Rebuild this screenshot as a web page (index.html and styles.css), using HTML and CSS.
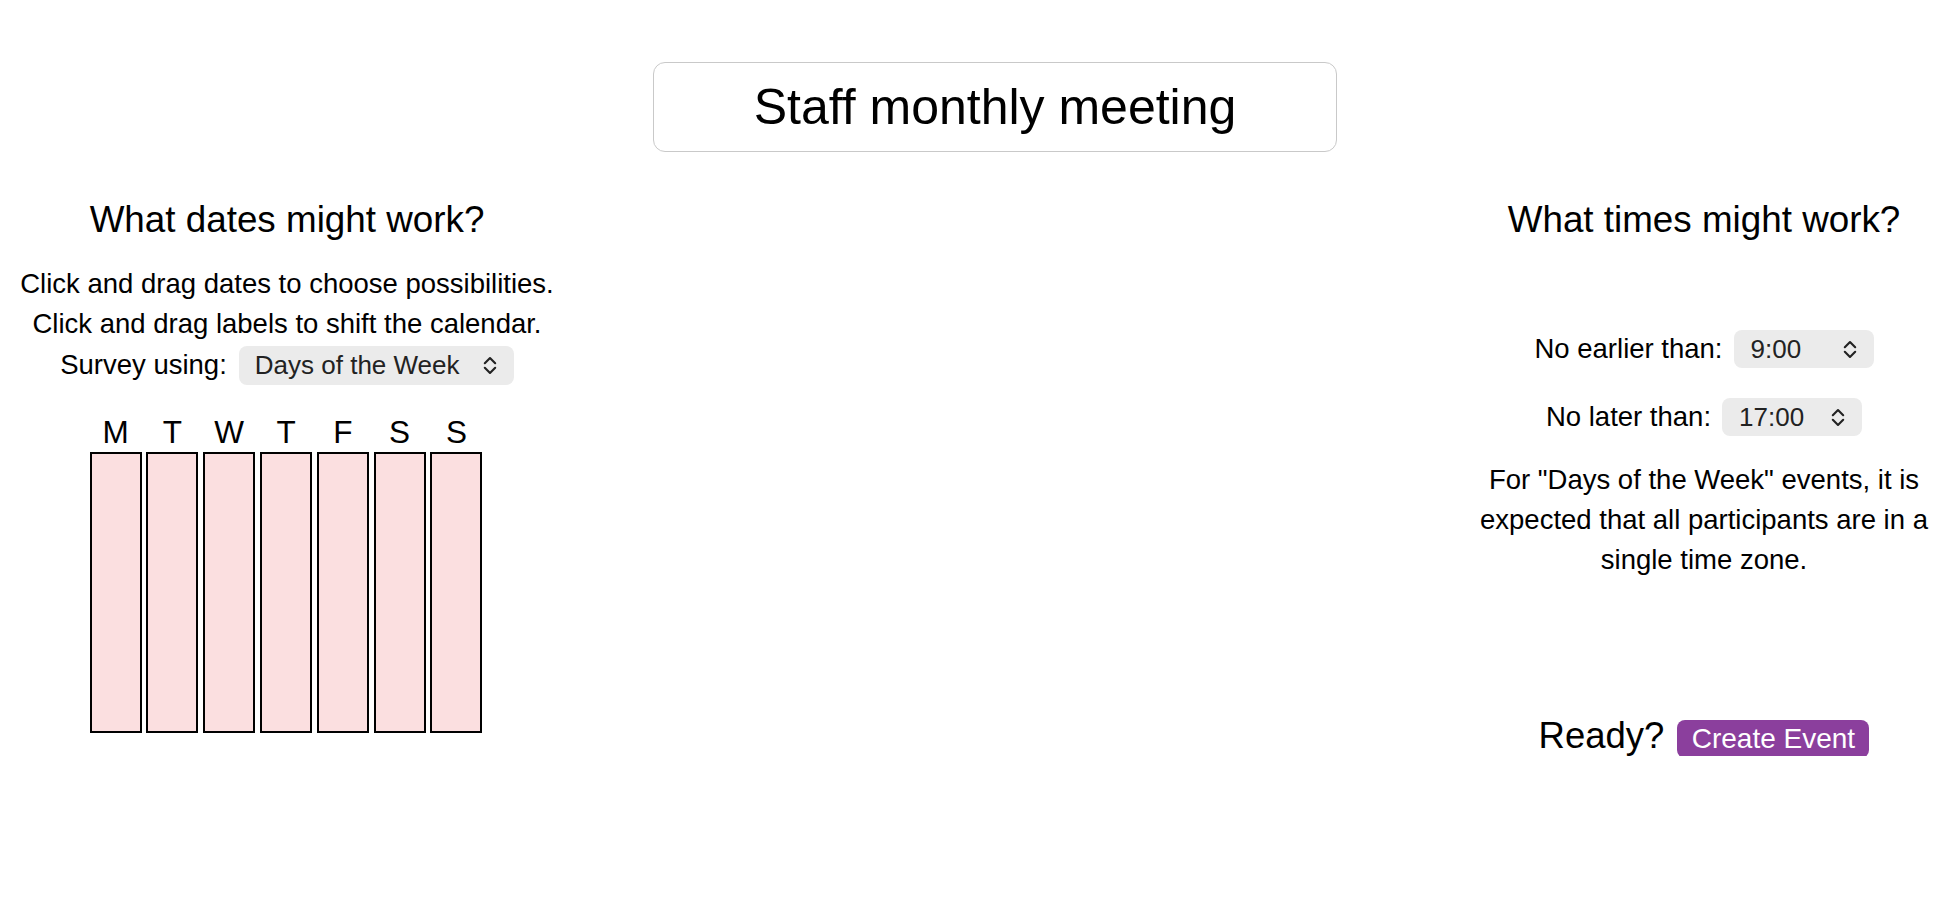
FILE: index.html
```html
<!DOCTYPE html>
<html lang="en">
<head>
<meta charset="utf-8">
<title>Create Event</title>
<link rel="stylesheet" href="styles.css">
</head>
<body>
<main class="page">
  <div class="title-row">
    <input class="event-name" type="text" value="Staff monthly meeting">
  </div>
  <div class="columns">
    <section class="dates">
      <h2 class="heading">What dates might work?</h2>
      <p class="instructions">Click and drag dates to choose possibilities.<br>Click and drag labels to shift the calendar.</p>
      <div class="field-row survey-row">
        <span class="label">Survey using:</span>
        <span class="select-wrap wide">
          <select class="select"><option>Days of the Week</option><option>Specific Dates</option></select>
          <svg class="chevron" viewBox="0 0 14 19" width="14" height="19"><path d="M1.8 7.2 L7 2 L12.2 7.2 M1.8 11.8 L7 17 L12.2 11.8" fill="none" stroke="#222" stroke-width="2.1" stroke-linecap="round" stroke-linejoin="round"/></svg>
        </span>
      </div>
      <div class="week">
        <div class="day"><span class="day-label">M</span><div class="day-cell"></div></div>
        <div class="day"><span class="day-label">T</span><div class="day-cell"></div></div>
        <div class="day"><span class="day-label">W</span><div class="day-cell"></div></div>
        <div class="day"><span class="day-label">T</span><div class="day-cell"></div></div>
        <div class="day"><span class="day-label">F</span><div class="day-cell"></div></div>
        <div class="day"><span class="day-label">S</span><div class="day-cell"></div></div>
        <div class="day"><span class="day-label">S</span><div class="day-cell"></div></div>
      </div>
    </section>
    <section class="times">
      <h2 class="heading">What times might work?</h2>
      <div class="field-row time-row first">
        <span class="label">No earlier than:</span>
        <span class="select-wrap narrow">
          <select class="select"><option>9:00</option></select>
          <svg class="chevron" viewBox="0 0 14 19" width="14" height="19"><path d="M1.8 7.2 L7 2 L12.2 7.2 M1.8 11.8 L7 17 L12.2 11.8" fill="none" stroke="#222" stroke-width="2.1" stroke-linecap="round" stroke-linejoin="round"/></svg>
        </span>
      </div>
      <div class="field-row time-row">
        <span class="label">No later than:</span>
        <span class="select-wrap narrow">
          <select class="select"><option>17:00</option></select>
          <svg class="chevron" viewBox="0 0 14 19" width="14" height="19"><path d="M1.8 7.2 L7 2 L12.2 7.2 M1.8 11.8 L7 17 L12.2 11.8" fill="none" stroke="#222" stroke-width="2.1" stroke-linecap="round" stroke-linejoin="round"/></svg>
        </span>
      </div>
      <p class="note">For "Days of the Week" events, it is expected that all participants are in a single time zone.</p>
      <div class="ready-row">
        <span class="ready">Ready?</span>
        <button class="create" type="button">Create Event</button>
      </div>
    </section>
  </div>
</main>
</body>
</html>
```

FILE: styles.css
```css
* {
  box-sizing: border-box;
}

html, body {
  margin: 0;
  padding: 0;
  background: #ffffff;
}

body {
  font-family: "Liberation Sans", Arial, Helvetica, sans-serif;
  color: #000;
}

.page {
  padding: 62px 8px 0 8px;
}

.title-row {
  display: flex;
  justify-content: center;
  padding-left: 39px;
}

.event-name {
  width: 684px;
  height: 90px;
  border: 1px solid #c9c9c9;
  border-radius: 12px;
  font-family: "Liberation Sans", Arial, Helvetica, sans-serif;
  font-size: 50px;
  text-align: center;
  color: #000;
  background: #fff;
  outline: none;
  padding: 0 10px;
}

.columns {
  display: flex;
  justify-content: space-between;
  align-items: flex-start;
  margin-top: 46px;
}

.dates {
  width: 558px;
  display: flex;
  flex-direction: column;
  align-items: center;
}

.times {
  width: 478px;
  display: flex;
  flex-direction: column;
  align-items: center;
  text-align: center;
}

.heading {
  margin: 0;
  font-size: 36.8px;
  font-weight: normal;
  line-height: 44px;
  white-space: nowrap;
}

.instructions {
  margin: 22px 0 0 0;
  font-size: 27.5px;
  line-height: 40px;
  text-align: center;
  white-space: nowrap;
}

.field-row {
  display: flex;
  align-items: center;
  justify-content: center;
  gap: 12px;
  font-size: 27.5px;
  white-space: nowrap;
}

.survey-row {
  height: 42px;
}

.time-row {
  height: 38px;
  gap: 11px;
}

.time-row.first {
  margin-top: 88px;
}

.time-row + .time-row {
  margin-top: 30px;
}

.select-wrap {
  position: relative;
  display: inline-flex;
  align-items: center;
}

.select {
  appearance: none;
  -webkit-appearance: none;
  border: none;
  outline: none;
  background: #ebebeb;
  border-radius: 8px;
  height: 39px;
  font-family: "Liberation Sans", Arial, Helvetica, sans-serif;
  font-size: 26px;
  color: #222;
  padding: 0 16px;
}

.select-wrap.wide .select {
  width: 275px;
}

.select-wrap.narrow .select {
  width: 140px;
  height: 38px;
  padding-left: 17px;
}

.chevron {
  position: absolute;
  right: 17px;
  top: 50%;
  margin-top: -9.5px;
  pointer-events: none;
}

.week {
  display: flex;
  gap: 4.8px;
  margin-top: 28px;
  margin-left: -2px;
}

.day {
  display: flex;
  flex-direction: column;
  align-items: center;
}

.day-label {
  font-size: 31.5px;
  line-height: 36px;
  height: 36px;
}

.day-cell {
  margin-top: 2px;
  width: 52px;
  height: 281px;
  background: #fbdfe0;
  border: 2px solid #000;
}

.note {
  margin: 24px 0 0 0;
  font-size: 27.5px;
  line-height: 40px;
}

.ready-row {
  display: flex;
  align-items: center;
  justify-content: center;
  gap: 13px;
  margin-top: 136px;
  height: 40px;
}

.ready {
  font-size: 36.5px;
  line-height: 40px;
}

.create {
  background: #8b3f9d;
  color: #fff;
  border: none;
  border-radius: 8px;
  height: 38px;
  width: 192px;
  padding: 0;
  font-family: "Liberation Sans", Arial, Helvetica, sans-serif;
  font-size: 28px;
  line-height: 38px;
  margin-top: 6px;
}
```
